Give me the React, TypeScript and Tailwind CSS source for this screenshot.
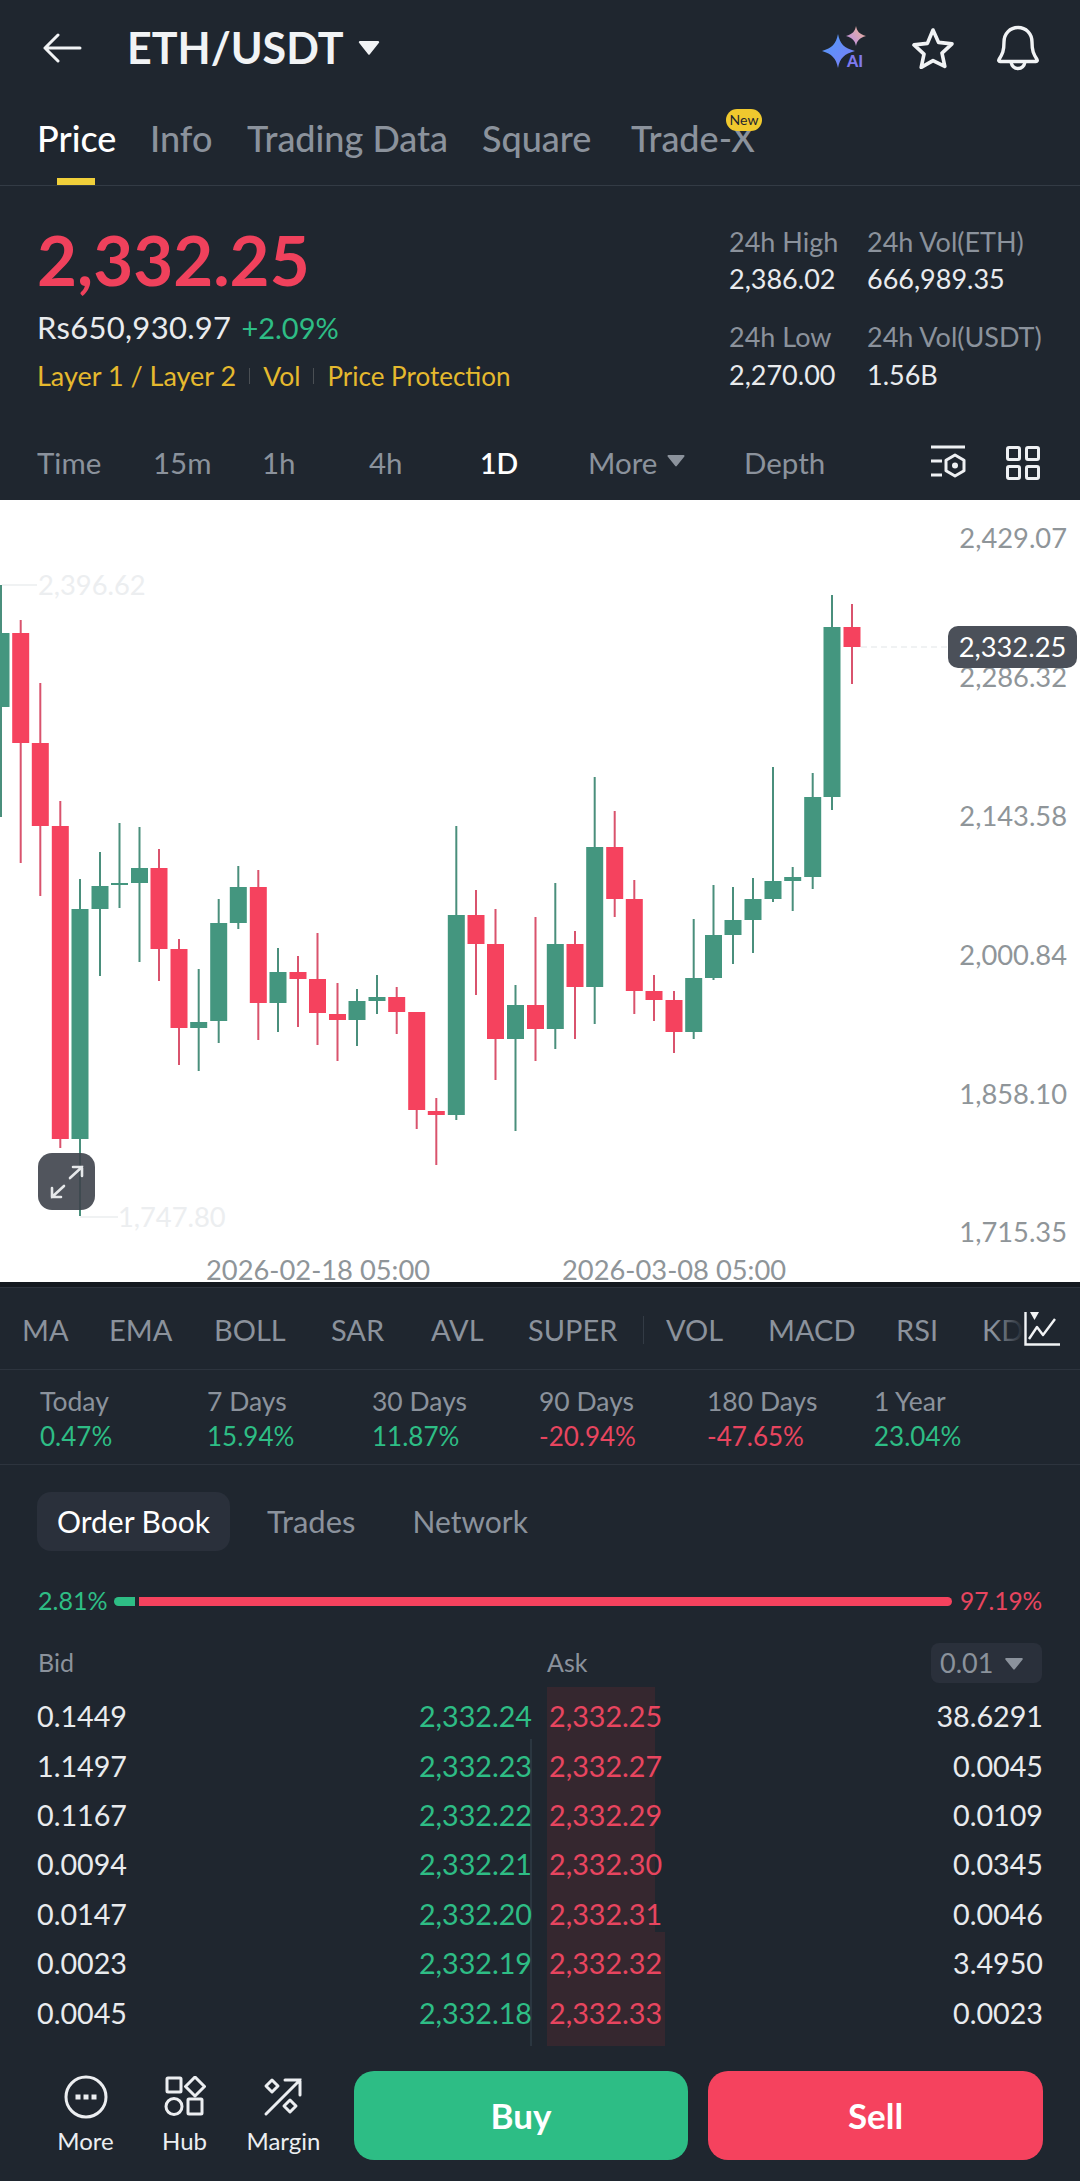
// [x, wickTop, bodyTop, bodyBottom, wickBottom, up]
const candles: [number, number, number, number, number, boolean][] = [
  [1, 585, 633, 707, 817, true],
  [20.7, 620, 633, 743, 863, false],
  [40.3, 683, 743, 826, 896, false],
  [60.3, 801, 826, 1139, 1148, false],
  [80, 879, 909, 1139, 1216, true],
  [100, 852, 886, 909, 976, true],
  [119.5, 823, 883, 885, 908, true],
  [139.5, 827, 868, 883, 962, true],
  [159, 849, 868, 949, 981, false],
  [179, 939, 949, 1028, 1065, false],
  [198.7, 969, 1022, 1028, 1071, true],
  [218.7, 899, 923, 1021, 1043, true],
  [238.3, 866, 887, 923, 929, true],
  [258.3, 870, 887, 1003, 1040, false],
  [278, 948, 972, 1003, 1032, true],
  [298, 956, 972, 979, 1027, false],
  [317.5, 933, 979, 1013, 1045, false],
  [337.5, 983, 1014, 1020, 1061, false],
  [357, 989, 1001, 1020, 1046, true],
  [377, 975, 997, 1001, 1014, true],
  [396.7, 987, 997, 1012, 1034, false],
  [416.7, 1012, 1012, 1110, 1129, false],
  [436.3, 1098, 1111, 1115, 1165, false],
  [456.3, 826, 915, 1115, 1120, true],
  [476, 890, 915, 944, 995, false],
  [495.5, 909, 944, 1039, 1080, false],
  [515.5, 985, 1005, 1039, 1131, true],
  [535.5, 917, 1005, 1029, 1061, false],
  [555.3, 883, 944, 1029, 1049, true],
  [575, 931, 944, 987, 1039, false],
  [594.7, 777, 847, 987, 1024, true],
  [614.7, 811, 847, 899, 917, false],
  [634.3, 880, 899, 991, 1014, false],
  [654, 975, 991, 1000, 1021, false],
  [674, 991, 1000, 1032, 1053, false],
  [693.7, 919, 978, 1032, 1039, true],
  [713.5, 885, 935, 978, 980, true],
  [733, 887, 920, 935, 964, true],
  [753, 878, 899, 920, 953, true],
  [773, 767, 881, 899, 902, true],
  [792.7, 867, 877, 881, 911, true],
  [812.7, 773, 797, 877, 889, true],
  [832, 595, 627, 797, 810, true],
  [852, 604, 627, 647, 684, false],
];

const axis = [
  { label: '2,429.07', top: 20 },
  { label: '2,286.32', top: 159 },
  { label: '2,143.58', top: 298 },
  { label: '2,000.84', top: 437 },
  { label: '1,858.10', top: 576 },
  { label: '1,715.35', top: 714 },
];

const topTabs = [
  { label: 'Price', w: 'w-[113px]' },
  { label: 'Info', w: 'w-[97px]' },
  { label: 'Trading Data', w: 'w-[235px]' },
  { label: 'Square', w: 'w-[149px]' },
  { label: 'Trade-X', w: 'w-[125px]' },
];

const intervals = [
  { label: 'Time', w: 'w-[116px]' },
  { label: '15m', w: 'w-[109px]' },
  { label: '1h', w: 'w-[107px]' },
  { label: '4h', w: 'w-[111px]' },
  { label: '1D', w: 'w-[108px]', active: true },
];

const indicators = [
  { label: 'MA', w: 'w-[87px]' },
  { label: 'EMA', w: 'w-[105px]' },
  { label: 'BOLL', w: 'w-[117px]' },
  { label: 'SAR', w: 'w-[100px]' },
  { label: 'AVL', w: 'w-[97px]' },
  { label: 'SUPER', w: 'w-[115px]' },
];

const indicators2 = [
  { label: 'VOL', w: 'w-[102px]' },
  { label: 'MACD', w: 'w-[128px]' },
  { label: 'RSI', w: 'w-[86px]' },
];

const periods = [
  { label: 'Today', value: '0.47%', up: true },
  { label: '7 Days', value: '15.94%', up: true },
  { label: '30 Days', value: '11.87%', up: true },
  { label: '90 Days', value: '-20.94%', up: false },
  { label: '180 Days', value: '-47.65%', up: false },
  { label: '1 Year', value: '23.04%', up: true },
];

const book = [
  ['0.1449', '2,332.24', '2,332.25', '38.6291'],
  ['1.1497', '2,332.23', '2,332.27', '0.0045'],
  ['0.1167', '2,332.22', '2,332.29', '0.0109'],
  ['0.0094', '2,332.21', '2,332.30', '0.0345'],
  ['0.0147', '2,332.20', '2,332.31', '0.0046'],
  ['0.0023', '2,332.19', '2,332.32', '3.4950'],
  ['0.0045', '2,332.18', '2,332.33', '0.0023'],
];

function Caret({ className }: { className: string }) {
  return (
    <svg viewBox="0 0 20 14" className={className} fill="currentColor">
      <path d="M1.5 1h17a1 1 0 0 1 .8 1.6l-8.5 10.6a1 1 0 0 1-1.6 0L.7 2.6A1 1 0 0 1 1.5 1z" />
    </svg>
  );
}

function BackIcon() {
  return (
    <svg viewBox="0 0 40 30" className="w-[40px] h-[30px]" fill="none" stroke="#f1f3f5" strokeWidth="3" strokeLinecap="round" strokeLinejoin="round">
      <path d="M3 15H38M16 2L3 15L16 28" />
    </svg>
  );
}

function AiIcon() {
  return (
    <div className="relative w-[48px] h-[44px]">
      <svg viewBox="0 0 48 44" className="w-[48px] h-[44px]">
        <defs>
          <linearGradient id="bigStar" x1="0" y1="0" x2="1" y2="1">
            <stop offset="0" stopColor="#4f9bf8" />
            <stop offset="1" stopColor="#7d7cf6" />
          </linearGradient>
          <linearGradient id="smallStar" x1="0" y1="1" x2="1" y2="0">
            <stop offset="0" stopColor="#b58cf2" />
            <stop offset="1" stopColor="#f2b58c" />
          </linearGradient>
        </defs>
        <path d="M16 8 C18 18 22 22 33 25 C22 28 18 32 16 42 C14 32 10 28 0 25 C10 22 14 18 16 8z" fill="url(#bigStar)" />
        <path d="M34 0 C35 5 37 8 44 10 C37 12 35 15 34 20 C33 15 31 12 24 10 C31 8 33 5 34 0z" fill="url(#smallStar)" />
      </svg>
      <span className="absolute left-[25px] top-[28px] text-[16px] leading-[14px] font-black text-[#7e79ee]">AI</span>
    </div>
  );
}

function StarIcon() {
  return (
    <svg viewBox="0 0 44 42" className="w-[44px] h-[42px]" fill="none" stroke="#f1f3f5" strokeWidth="3.6" strokeLinejoin="round">
      <path d="M22 3l5.6 12.4 13.4 1.5-10 9.2 2.8 13.3L22 33.6l-11.8 6.8L13 27.1 3 17.9l13.4-1.5z" />
    </svg>
  );
}

function BellIcon() {
  return (
    <svg viewBox="0 0 44 46" className="w-[44px] h-[46px]" fill="none" stroke="#f1f3f5" strokeWidth="3.4" strokeLinejoin="round" strokeLinecap="round">
      <path d="M22 2.5c-8 0-14 6-14 14.5 0 9-1.5 12-5 17.5-.6 1-.2 2 1 2h36c1.200 0 1.600-1 1-2-3.500-5.500-5-8.500-5-17.500C36 8.500 30 2.500 22 2.500z" />
      <path d="M15 37c.8 4 3.500 6.500 7 6.500s6.200-2.500 7-6.500" />
    </svg>
  );
}

function IndicatorSettingsIcon() {
  return (
    <svg viewBox="0 0 36 36" className="w-[36px] h-[36px]" fill="none" stroke="#eef0f3" strokeWidth="3">
      <path d="M1 2h34M1 16h11M1 30h11" />
      <path d="M25 10l9 5.200v10.600l-9 5.200-9-5.200V15.200z" strokeLinejoin="round" />
      <circle cx="25" cy="20.500" r="3" fill="#eef0f3" stroke="none" />
    </svg>
  );
}

function GridIcon() {
  return (
    <svg viewBox="0 0 34 34" className="w-[34px] h-[34px]" fill="none" stroke="#eef0f3" strokeWidth="3">
      <rect x="1.500" y="1.500" width="12" height="12" rx="1.500" />
      <rect x="20.500" y="1.500" width="12" height="12" rx="1.500" />
      <rect x="1.500" y="20.500" width="12" height="12" rx="1.500" />
      <rect x="20.500" y="20.500" width="12" height="12" rx="1.500" />
    </svg>
  );
}

function ExpandIcon() {
  return (
    <svg viewBox="0 0 36 36" className="w-[36px] h-[36px]" fill="none" stroke="#e6e8ea" strokeWidth="2.600" strokeLinecap="round">
      <path d="M21 14L33 3M24 3h9v9" />
      <path d="M15 22L3 33M3 24v9h9" />
    </svg>
  );
}

function LineChartIcon() {
  return (
    <svg viewBox="0 0 36 36" className="w-[36px] h-[36px]" fill="none" stroke="#f1f3f5" strokeWidth="2.400">
      <path d="M1.500 1v32.500H36" />
      <path d="M5 28l8-12 6 8 12-16" strokeLinejoin="round" />
      <path d="M6 1h9l-4.500 8z" fill="#f1f3f5" stroke="none" />
    </svg>
  );
}

function MoreIcon() {
  return (
    <svg viewBox="0 0 44 44" className="w-[44px] h-[44px]" fill="none" stroke="#eceef1" strokeWidth="3">
      <circle cx="22" cy="22" r="20" />
      <rect x="11.500" y="19.500" width="5" height="5" fill="#eceef1" stroke="none" />
      <rect x="19.500" y="19.500" width="5" height="5" fill="#eceef1" stroke="none" />
      <rect x="27.500" y="19.500" width="5" height="5" fill="#eceef1" stroke="none" />
    </svg>
  );
}

function HubIcon() {
  return (
    <svg viewBox="0 0 42 42" className="w-[42px] h-[42px]" fill="none" stroke="#eceef1" strokeWidth="3">
      <rect x="3" y="2" width="14" height="14" rx="1" />
      <path d="M31 1l9.500 9.500L31 20l-9.500-9.500z" strokeLinejoin="round" />
      <circle cx="10" cy="30.500" r="8" />
      <rect x="24" y="23" width="14" height="15" rx="1" />
    </svg>
  );
}

function MarginIcon() {
  return (
    <svg viewBox="0 0 42 42" className="w-[42px] h-[42px]" fill="none" stroke="#eceef1" strokeWidth="3" strokeLinecap="round">
      <path d="M3 38L37 4M22 4h15v15" />
      <path d="M9 4l6 6-6 6-6-6z" strokeLinejoin="round" />
      <path d="M27 24l6 6-6 6-6-6z" strokeLinejoin="round" />
    </svg>
  );
}

function Chart() {
  return (
    <div className="relative h-[782px] bg-white">
      <svg viewBox="0 500 1080 782" className="absolute inset-0 w-[1080px] h-[782px]">
        {candles.map(([x, wt, bt, bb, wb, up], i) => (
          <g key={i}>
            <rect x={x - 1} y={wt} width={2} height={wb - wt} fill={up ? '#4a8f7c' : '#d9536d'} />
            <rect x={x - 8.5} y={bt} width={17} height={Math.max(bb - bt, 2)} fill={up ? '#44967f' : '#f5425e'} />
          </g>
        ))}
        <path d="M2 585H37M80 1217H118" stroke="#eceef0" strokeWidth="1.500" />
        <path d="M861 647H948" stroke="#eceef0" strokeWidth="1.500" strokeDasharray="6 4" />
      </svg>

      <span className="absolute left-[38px] top-[69px] text-[27.3px] leading-[32px] text-[#eceef0]">2,396.62</span>
      <span className="absolute left-[118px] top-[701px] text-[27.3px] leading-[32px] text-[#eceef0]">1,747.80</span>

      {axis.map((a) => (
        <span key={a.label} className="absolute right-[13px] text-[27.3px] leading-[36px] text-[#8f9599]" style={{ top: a.top }}>
          {a.label}
        </span>
      ))}

      <div className="absolute left-[948px] top-[126px] w-[129px] h-[42px] rounded-[10px] bg-[#4b5059] flex items-center justify-center text-[27.3px] text-white">
        2,332.25
      </div>

      <div className="absolute left-[38px] top-[653px] w-[57px] h-[57px] rounded-[14px] bg-[#3e434b]/90 flex items-center justify-center">
        <ExpandIcon />
      </div>

      <span className="absolute left-[206px] top-[759px] text-[27.3px] leading-[22px] text-[#8f9599]">2026-02-18 05:00</span>
      <span className="absolute left-[562px] top-[759px] text-[27.3px] leading-[22px] text-[#8f9599]">2026-03-08 05:00</span>
    </div>
  );
}

export default function App() {
  return (
    <div className="w-[1080px] h-[2181px] overflow-hidden bg-[#1f262f] text-[#e9ebee] font-['Lato','Noto_Sans',sans-serif]">
      {/* 顶部标题 */}
      <div className="h-[95px] flex items-center pl-[42px] pr-[40px]">
        <BackIcon />
        <span className="ml-[45px] text-[43px] leading-none font-bold text-[#f1f3f5]">ETH/USDT</span>
        <Caret className="ml-[14px] w-[22px] h-[15px] text-[#f1f3f5]" />
        <div className="ml-auto flex items-center gap-[41px]">
          <AiIcon />
          <StarIcon />
          <BellIcon />
        </div>
      </div>

      {/* 页面 Tab */}
      <div className="h-[91px] border-b border-[#333b45] flex pl-[37px] pt-[23px]">
        {topTabs.map((t, i) => (
          <div key={t.label} className={`relative h-[67px] ${t.w}`}>
            <span className={`text-[36px] leading-[40px] font-medium ${i === 0 ? 'text-white' : 'text-[#8b929c]'}`}>{t.label}</span>
            {i === 0 && <div className="absolute left-[20px] top-[60px] w-[38px] h-[7px] bg-[#f0cf3a]" />}
            {t.label === 'Trade-X' && (
              <span className="absolute left-[95px] top-[-9px] w-[36px] h-[22px] rounded-full bg-[#f0c92e] text-[#1f262f] text-[14px] leading-[22px] text-center">
                New
              </span>
            )}
          </div>
        ))}
      </div>

      {/* 价格统计 */}
      <div className="h-[235px] flex pl-[37px] pt-[36px]">
        <div>
          <div className="text-[69px] leading-[76px] font-bold text-[#f0415c]">2,332.25</div>
          <div className="mt-[12px] flex items-baseline gap-[10px] leading-[34px]">
            <span className="text-[31px] tracking-[0.3px]">Rs650,930.97</span>
            <span className="text-[29px] text-[#2ebd85]">+2.09%</span>
          </div>
          <div className="mt-[14px] flex items-center text-[27px] leading-[34px] text-[#e5b92e]">
            <span>Layer 1 / Layer 2</span>
            <span className="mx-[13px] w-px h-[16px] bg-[#4a4f54]" />
            <span className="text-[26.5px]">Vol</span>
            <span className="mx-[13px] w-px h-[16px] bg-[#4a4f54]" />
            <span className="text-[26px]">Price Protection</span>
          </div>
        </div>
        <div className="ml-auto mr-[37px] w-[314px] grid grid-cols-[138px_1fr] text-[27px] leading-[32px] mt-[4px] content-start">
          <span className="text-[#8b929c]">24h High</span>
          <span className="text-[#8b929c]">24h Vol(ETH)</span>
          <span className="mt-[5px]">2,386.02</span>
          <span className="mt-[5px]">666,989.35</span>
          <span className="mt-[26px] text-[#8b929c]">24h Low</span>
          <span className="mt-[26px] text-[#8b929c]">24h Vol(USDT)</span>
          <span className="mt-[6px]">2,270.00</span>
          <span className="mt-[6px]">1.56B</span>
        </div>
      </div>

      {/* 周期切换 */}
      <div className="h-[79px] flex items-center pl-[37px] pr-[40px] pt-[5px] text-[29.5px] text-[#8b929c]">
        {intervals.map((t) => (
          <span key={t.label} className={`${t.w} ${t.active ? 'text-white font-semibold text-[28.5px]' : ''}`}>{t.label}</span>
        ))}
        <span className="w-[156px] flex items-center">
          More
          <Caret className="ml-[10px] mb-[6px] w-[18px] h-[13px] text-[#8b929c]" />
        </span>
        <span>Depth</span>
        <div className="ml-auto flex items-center gap-[40px]">
          <IndicatorSettingsIcon />
          <GridIcon />
        </div>
      </div>

      <Chart />
      <div className="h-[5px] bg-[#14191f]" />

      {/* 指标 */}
      <div className="relative h-[83px] border-t border-[#2d343e] border-b flex items-center pl-[22px] pt-[3px] text-[29px] text-[#8b929c] overflow-hidden">
        {indicators.map((t) => (
          <span key={t.label} className={`${t.w} shrink-0`}>{t.label}</span>
        ))}
        <span className="w-px h-[28px] bg-[#333b45] mr-[22px] shrink-0" />
        {indicators2.map((t) => (
          <span key={t.label} className={`${t.w} shrink-0`}>{t.label}</span>
        ))}
        <span className="shrink-0">KD</span>
        <div className="absolute right-[56px] top-0 bottom-0 w-[30px] bg-linear-to-r from-transparent to-[#1f262f]" />
        <div className="absolute right-0 top-0 bottom-0 w-[56px] bg-[#1f262f] flex items-center">
          <LineChartIcon />
        </div>
      </div>

      {/* 涨跌幅 */}
      <div className="h-[95px] border-b border-[#2d343e] grid grid-cols-[167px_165px_167px_168px_167px_1fr] pl-[40px] pt-[14px] leading-[35px]">
        {periods.map((p) => (
          <div key={p.label}>
            <div className="text-[26.5px] text-[#8b929c]">{p.label}</div>
            <div className={`text-[26px] ${p.up ? 'text-[#2ebd85]' : 'text-[#e8455f]'}`}>{p.value}</div>
          </div>
        ))}
      </div>

      {/* 盘口 Tab */}
      <div className="mt-[27px] ml-[37px] flex items-center h-[59px] text-[30px]">
        <span className="h-[59px] w-[193px] rounded-[14px] bg-[#2a303b] text-white flex items-center justify-center">Order Book</span>
        <span className="ml-[37px] text-[31px] text-[#8b929c]">Trades</span>
        <span className="ml-[57px] text-[#8b929c]">Network</span>
      </div>

      {/* 买卖比例 */}
      <div className="mt-[33px] pl-[38px] flex items-center h-[34px] text-[25px]">
        <span className="w-[76px] text-[#2ebd85]">2.81%</span>
        <div className="w-[21px] h-[9px] rounded-l-full bg-[#2ebd85]" />
        <div className="ml-[4px] w-[813px] h-[9px] rounded-r-full bg-[#f5425e]" />
        <span className="ml-[8px] text-[24.5px] text-[#e8455f]">97.19%</span>
      </div>

      {/* 盘口表头 */}
      <div className="mt-[25px] px-[38px] h-[40px] flex items-center text-[25px] text-[#8b929c]">
        <span className="w-[509px]">Bid</span>
        <span>Ask</span>
        <span className="ml-auto w-[111px] h-[40px] rounded-[8px] bg-[#2a303b] text-[27px] flex items-center pl-[9px] gap-[11px]">
          0.01
          <Caret className="w-[20px] h-[13px] text-[#8b929c]" />
        </span>
      </div>

      {/* 盘口 */}
      <div className="relative mt-[4px] h-[359px] pl-[37px] pr-[37px] pt-[5px] text-[28.7px]">
        <div className="absolute left-[530px] top-[52px] bottom-0 w-[2px] bg-[#2b3640]" />
        <div className="absolute left-[547px] top-0 w-[108px] h-[245px] bg-[#35272f]" />
        <div className="absolute left-[547px] top-[245px] w-[118px] bottom-0 bg-[#35272f]" />
        {book.map(([bq, bp, ap, aq]) => (
          <div key={ap} className="relative h-[49.4px] flex items-center">
            <span className="w-[120px]">{bq}</span>
            <span className="w-[375px] text-right text-[#2ebd85]">{bp}</span>
            <span className="ml-[17px] text-[#e8455f]">{ap}</span>
            <span className="ml-auto">{aq}</span>
          </div>
        ))}
      </div>

      {/* 底部操作栏 */}
      <div className="mt-[25px] flex pr-[37px] h-[89px]">
        <div className="w-[354px] flex pl-[36px] text-[24px] text-center text-[#eceef1]">
          {[
            { label: 'More', icon: <MoreIcon /> },
            { label: 'Hub', icon: <HubIcon /> },
            { label: 'Margin', icon: <MarginIcon /> },
          ].map((b) => (
            <div key={b.label} className="w-[99px] flex flex-col items-center">
              <div className="h-[52px] flex items-center">{b.icon}</div>
              <span className="leading-[30px] mt-[3px]">{b.label}</span>
            </div>
          ))}
        </div>
        <button className="w-[334px] h-[89px] rounded-[20px] bg-[#2dbd85] text-white text-[35px] font-bold">Buy</button>
        <button className="ml-[20px] w-[335px] h-[89px] rounded-[20px] bg-[#f5425e] text-white text-[35px] font-bold">Sell</button>
      </div>
    </div>
  );
}
